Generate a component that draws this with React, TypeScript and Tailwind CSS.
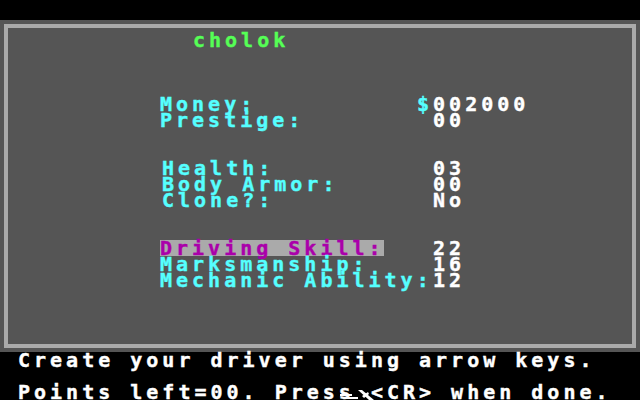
const cyan = "text-[#55ffff]";

type Stat = { label: string; value: string; dollar?: boolean; selected?: boolean };

const money: Stat[] = [
  { label: "Money:", value: "002000", dollar: true },
  { label: "Prestige:", value: " 00" },
];

const body: Stat[] = [
  { label: "Health:", value: " 03" },
  { label: "Body Armor:", value: " 00" },
  { label: "Clone?:", value: " No" },
];

const skills: Stat[] = [
  { label: "Driving Skill:", value: " 22", selected: true },
  { label: "Marksmanship:", value: " 16" },
  { label: "Mechanic Ability:", value: " 12" },
];

const StatGroup = ({ stats, indent }: { stats: Stat[]; indent: "ml-[152px]" | "ml-[154px]" }) => (
  <div className={`${indent} flex flex-col`}>
    {stats.map((s) => (
      <div key={s.label} className="flex h-[16px]">
        <div className={`shrink-0 ${indent === "ml-[152px]" ? "w-[257px]" : "w-[255px]"}`}>
          {s.selected ? (
            <div className="w-[224px] h-[16px] bg-[#aaaaaa] text-[#aa00aa]">{s.label}</div>
          ) : (
            <div className={cyan}>{s.label}</div>
          )}
        </div>
        <div className="text-white">
          {s.dollar && <span className={cyan}>$</span>}
          {s.value}
        </div>
      </div>
    ))}
  </div>
);

export default function App() {
  return (
    <div className="w-[640px] h-[400px] bg-black overflow-hidden whitespace-pre font-['DejaVu_Sans_Mono',monospace] font-bold text-[20px] leading-[16px] tracking-[4px] [-webkit-text-stroke:0.4px_currentColor]">
      <div className="mt-[20px] h-[332px] bg-[#555555] p-[4px]">
        <div className="h-full border-4 border-[#aaaaaa] flex flex-col">
          <div className="mt-[4px] ml-[185px] text-[#55ff55]">cholok</div>
          <div className="mt-[48px]">
            <StatGroup stats={money} indent="ml-[152px]" />
          </div>
          <div className="mt-[32px]">
            <StatGroup stats={body} indent="ml-[154px]" />
          </div>
          <div className="mt-[32px]">
            <StatGroup stats={skills} indent="ml-[152px]" />
          </div>
        </div>
      </div>

      <div className="pl-[18px] text-white">Create your driver using arrow keys.</div>
      <div className="relative mt-[16px] pl-[18px] text-white">
        Points left=00. Press <span>&lt;CR&gt; when done.</span>
        {/* stray mouse pointer left on screen */}
        <svg className="absolute left-[336px] top-[2px]" width="42" height="14" viewBox="0 0 42 14">
          <rect x="4" y="8" width="12" height="2" fill="#fff" />
          <rect x="8" y="11" width="14" height="2" fill="#fff" />
          <polygon points="22,4 26,4 38,14 33,14" fill="#fff" />
          <polygon points="26,10 32,6 33,8 28,12" fill="#fff" />
        </svg>
      </div>
    </div>
  );
}
